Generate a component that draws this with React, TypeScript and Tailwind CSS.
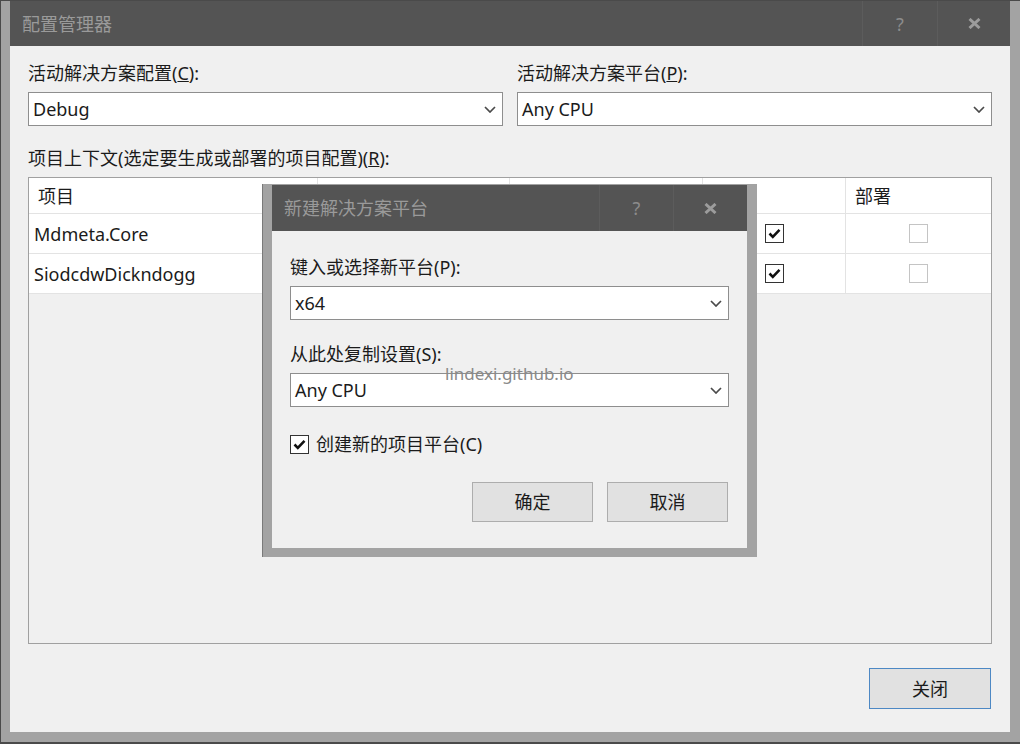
import React from "react";

const font = "font-['Noto_Sans','Noto_Sans_CJK_SC',sans-serif]";

function Chevron() {
  return (
    <svg width="12" height="7" viewBox="0 0 12 7" className="shrink-0">
      <path d="M1 1l5 5 5-5" fill="none" stroke="#4a4a4a" strokeWidth="1.7" />
    </svg>
  );
}

function Combo({ value }: { value: string }) {
  return (
    <div className="h-[34px] bg-white border border-[#8e8e8e] flex items-center justify-between pl-[4px] pr-[6px]">
      <span>{value}</span>
      <Chevron />
    </div>
  );
}

function Check({ checked, dim }: { checked?: boolean; dim?: boolean }) {
  return (
    <div
      className={
        "w-[19px] h-[19px] bg-white border flex items-center justify-center " +
        (dim ? "border-[#c4c4c4]" : "border-[#333333]")
      }
    >
      {checked && (
        <svg width="15" height="15" viewBox="0 0 15 15">
          <path d="M2.5 7.5l3.3 3.3 6.7-7" fill="none" stroke="#111" strokeWidth="2.6" />
        </svg>
      )}
    </div>
  );
}

function CloseGlyph() {
  return (
    <svg width="13" height="11" viewBox="0 0 13 11">
      <path d="M1.5 1l10 9M11.5 1l-10 9" stroke="#9c9c9c" strokeWidth="3" />
    </svg>
  );
}

function TitleButtons({ w1, w2 }: { w1: string; w2: string }) {
  return (
    <div className="flex h-full">
      <div className={w1 + " h-full border-l border-[#5c5c5c] flex items-center justify-center text-[18px] text-[#8c8c8c]"}>
        ?
      </div>
      <div className={w2 + " h-full border-l border-[#5c5c5c] flex items-center justify-center"}>
        <CloseGlyph />
      </div>
    </div>
  );
}

const rows = [
  { name: "Mdmeta.Core" },
  { name: "SiodcdwDickndogg" },
];

export default function App() {
  return (
    <div
      className={
        font +
        " relative w-[1020px] h-[744px] bg-[#a3a3a3] border-t border-l border-b-2 border-[#4a4a4a] pl-[9px] pr-[10px] pb-[10px] flex flex-col text-[18px] leading-6 text-[#1b1b1b]"
      }
    >
      {/* title bar */}
      <div className="h-[45px] bg-[#545454] flex items-center justify-between pl-[12px]">
        <span className="text-[#9a9a9a] text-[18px]">配置管理器</span>
        <TitleButtons w1="w-[75px]" w2="w-[73px]" />
      </div>

      {/* body */}
      <div className="relative flex-1 bg-[#f0f0f0] px-[18px] pt-[15px] flex flex-col">
        <div className="grid grid-cols-2 gap-x-[14px]">
          <div>
            <div>
              活动解决方案配置(<span className="underline">C</span>):
            </div>
            <div className="mt-[7px]">
              <Combo value="Debug" />
            </div>
          </div>
          <div>
            <div>
              活动解决方案平台(<span className="underline">P</span>):
            </div>
            <div className="mt-[7px]">
              <Combo value="Any CPU" />
            </div>
          </div>
        </div>

        <div className="mt-[20px]">
          项目上下文(选定要生成或部署的项目配置)(<span className="underline">R</span>):
        </div>

        <div className="mt-[7px] h-[467px] border border-[#a0a0a0] bg-[#f0f0f0] flex flex-col">
          <div className="grid grid-cols-[289px_192px_193px_143px_1fr] h-[36px] bg-white border-b border-[#e3e3e3]">
            <div className="border-r border-[#e3e3e3] pl-[9px] flex items-center">项目</div>
            <div className="border-r border-[#e3e3e3]" />
            <div className="border-r border-[#e3e3e3]" />
            <div className="border-r border-[#e3e3e3]" />
            <div className="pl-[9px] flex items-center">部署</div>
          </div>
          {rows.map((r) => (
            <div
              key={r.name}
              className="grid grid-cols-[289px_192px_193px_143px_1fr] h-[40px] bg-white border-b border-[#e3e3e3]"
            >
              <div className="border-r border-[#e3e3e3] pl-[5px] flex items-center">{r.name}</div>
              <div className="border-r border-[#e3e3e3]" />
              <div className="border-r border-[#e3e3e3]" />
              <div className="border-r border-[#e3e3e3] flex items-center justify-center">
                <Check checked />
              </div>
              <div className="flex items-center justify-center">
                <Check dim />
              </div>
            </div>
          ))}
        </div>

        <div className="mt-[24px] flex justify-end pr-[1px]">
          <button className="w-[122px] h-[41px] bg-[#e1e1e1] border border-[#4d88c4] flex items-center justify-center">
            关闭
          </button>
        </div>

        {/* new platform dialog */}
        <div className="absolute left-[252px] top-[138px] w-[495px] h-[373px] bg-[#a3a3a3] border-l border-[#7a7a7a] pl-[9px] pr-[10px] pb-[9px] pt-[1px] flex flex-col">
          <div className="h-[46px] bg-[#545454] flex items-center justify-between pl-[12px]">
            <span className="text-[#9a9a9a] text-[18px]">新建解决方案平台</span>
            <TitleButtons w1="w-[74px]" w2="w-[74px]" />
          </div>
          <div className="flex-1 bg-[#f0f0f0] pl-[18px] pr-[18px] pt-[24px] flex flex-col">
            <div>键入或选择新平台(P):</div>
            <div className="mt-[7px]">
              <Combo value="x64" />
            </div>
            <div className="mt-[22px]">从此处复制设置(S):</div>
            <div className="mt-[7px]">
              <Combo value="Any CPU" />
            </div>
            <div className="mt-[25px] h-[24px] flex items-center gap-[7px]">
              <Check checked />
              <span>创建新的项目平台(C)</span>
            </div>
            <div className="mt-[26px] flex justify-end gap-[14px] pr-[1px]">
              <button className="w-[121px] h-[40px] bg-[#e1e1e1] border border-[#adadad] flex items-center justify-center">
                确定
              </button>
              <button className="w-[121px] h-[40px] bg-[#e1e1e1] border border-[#adadad] flex items-center justify-center">
                取消
              </button>
            </div>
          </div>
        </div>
      </div>

      {/* watermark */}
      <div className="absolute left-[444px] top-[361px] text-[17px] leading-6 text-[#8a8a8a] pointer-events-none">
        lindexi.github.io
      </div>
    </div>
  );
}
